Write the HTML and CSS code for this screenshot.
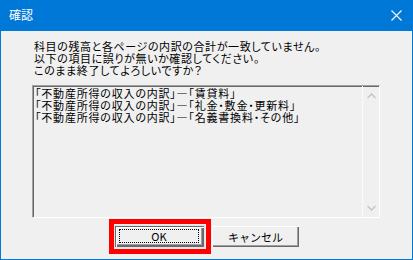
FILE: index.html
```html
<!DOCTYPE html>
<html lang="ja">
<head>
    <meta charset="UTF-8">
    <meta name="viewport" content="width=device-width, initial-scale=1.0">
    <title>確認</title>
    <link rel="stylesheet" href="styles.css">
</head>
<body>
    <div class="window">
        <div class="titlebar">
            <span class="title">確認</span>
            <svg class="close" width="11" height="11" viewBox="0 0 11 11">
                <path d="M0.5 0.5 L10.5 10.5 M10.5 0.5 L0.5 10.5" stroke="#fff" stroke-width="1.1" fill="none"/>
            </svg>
        </div>

        <div class="content">
            <!-- メッセージ -->
            <p class="message">
                科目の残高と各ページの内訳の合計が一致していません。<br>
                以下の項目に誤りが無いか確認してください。<br>
                このまま終了してよろしいですか？
            </p>

            <!-- 項目リスト -->
            <div class="listbox">
                <ul class="items">
                    <li>「不動産所得の収入の内訳」―「賃貸料」</li>
                    <li>「不動産所得の収入の内訳」―「礼金・敷金・更新料」</li>
                    <li>「不動産所得の収入の内訳」―「名義書換料・その他」</li>
                </ul>
                <div class="scrollbar">
                    <svg width="9" height="6" viewBox="0 0 9 6">
                        <path d="M0.5 5 L4.5 1 L8.5 5" stroke="#c4c4c4" stroke-width="1.5" fill="none"/>
                    </svg>
                    <svg width="9" height="6" viewBox="0 0 9 6">
                        <path d="M0.5 1 L4.5 5 L8.5 1" stroke="#c4c4c4" stroke-width="1.5" fill="none"/>
                    </svg>
                </div>
            </div>

            <!-- ボタン -->
            <div class="buttons">
                <div class="highlight">
                    <button class="btn default"><span class="focus">OK</span></button>
                </div>
                <button class="btn">キャンセル</button>
            </div>
        </div>
    </div>
</body>
</html>
```

FILE: styles.css
```css
* {
    box-sizing: border-box;
}
body {
    margin: 0;
    font-family: "Noto Sans CJK JP", "Noto Sans", sans-serif;
    font-size: 11px;
    color: #000;
}
.window {
    width: 413px;
    height: 260px;
    background: #0078d7;
    padding: 0 1px 1px 1px;
    display: flex;
    flex-direction: column;
}
.titlebar {
    height: 31px;
    display: flex;
    align-items: center;
    justify-content: space-between;
    padding: 0 10px 1px 8px;
    color: #fff;
}
.title {
    font-size: 12px;
    line-height: 14px;
}
.close {
    display: block;
}
.content {
    flex: 1;
    background: #f0f0f0;
    padding: 9px 0 0 31px;
}
.message {
    margin: 0 0 9px 2px;
    line-height: 12px;
    letter-spacing: 0.6px;
    font-feature-settings: "palt";
}
.listbox {
    width: 348px;
    height: 133px;
    display: flex;
    border-top: 1px solid #a0a0a0;
    border-left: 1px solid #a0a0a0;
    border-right: 1px solid #fff;
    border-bottom: 1px solid #fff;
    box-shadow: inset 1px 1px 0 #696969;
}
.items {
    flex: 1;
    list-style: none;
    margin: 0;
    padding: 1px 0 0 2px;
    line-height: 12px;
    letter-spacing: 0.8px;
    font-feature-settings: "palt";
}
.items li {
    height: 12px;
}
.scrollbar {
    width: 17px;
    border-left: 1px solid #fafafa;
    display: flex;
    flex-direction: column;
    justify-content: space-between;
    align-items: center;
    padding: 7px 0 6px 0;
}
.scrollbar svg {
    display: block;
}
.buttons {
    display: flex;
    align-items: center;
    margin: 1px 0 0 77px;
    gap: 1px;
}
.highlight {
    border: 5px solid #ff0000;
    padding: 2px 2px 2px 1px;
}
.btn {
    width: 87px;
    height: 21px;
    margin: 0;
    padding: 0;
    font-family: inherit;
    font-size: 11px;
    line-height: 12px;
    color: #000;
    background: #f0f0f0;
    border: none;
    box-shadow: inset 1px 1px 0 #fff, inset -1px -1px 0 #696969, inset -2px -2px 0 #a0a0a0;
    display: flex;
    align-items: center;
    justify-content: center;
}
.btn.default {
    width: 89px;
    box-shadow: 0 0 0 1px #e3e3e3, inset 1px 1px 0 #696969, inset 2px 2px 0 #fff, inset -1px -1px 0 #696969, inset -2px -2px 0 #696969, inset -3px -3px 0 #a0a0a0;
    padding: 3px 5px 4px 4px;
}
.focus {
    flex: 1;
    align-self: stretch;
    border: 1px dotted #000;
    display: flex;
    align-items: center;
    justify-content: center;
}
```
